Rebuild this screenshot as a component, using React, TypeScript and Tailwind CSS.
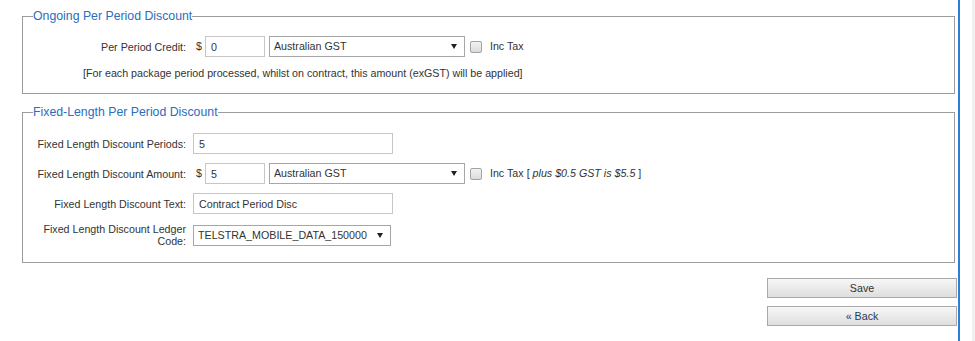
import React from "react";

function GstSelect({ value, w }: { value: string; w: string }) {
  return (
    <div className={`relative ${w} h-[21px] shrink-0`}>
      <select
        defaultValue={value}
        className="block appearance-none w-full h-full border border-[#a6a6a6] bg-white pl-[4px] text-[10.7px] text-[#333] outline-none rounded-none"
      >
        <option>{value}</option>
      </select>
      <svg
        className="absolute right-[8px] top-[8px] pointer-events-none"
        width="6"
        height="5"
        viewBox="0 0 6 5"
      >
        <path d="M0 0h6L3 5z" fill="#222" />
      </svg>
    </div>
  );
}

function TextBox({ value, w }: { value: string; w: string }) {
  return (
    <input
      type="text"
      defaultValue={value}
      className={`block ${w} h-[21px] shrink-0 border border-[#c6c6c6] bg-white px-[5px] text-[10.7px] text-[#333] outline-none`}
    />
  );
}

function CheckBox() {
  return (
    <input
      type="checkbox"
      className="block appearance-none w-[12px] h-[12px] shrink-0 rounded-[2px] border border-[#a3a3a3] bg-gradient-to-b from-[#f2f2f2] to-[#dcdcdc] m-0"
    />
  );
}

function Label({ children }: { children: React.ReactNode }) {
  return (
    <div className="text-right text-[10.7px] leading-[12px] text-[#333] pr-[1px]">{children}</div>
  );
}

function Dollar() {
  return <span className="ml-[3px] mr-[3px] text-[10.7px] text-[#333]">$</span>;
}

export default function App() {
  return (
    <div className="flex h-[341px] w-[975px] font-['Liberation_Sans',Arial,sans-serif] text-[#333] bg-[#f0f0f0]">
      <div className="w-[958px] bg-white flex flex-col pt-[6px]">
        {/* Fieldset 1 */}
        <fieldset className="ml-[22px] mr-[3px] border border-[#9c9c9c] pb-[13px]">
          <legend className="ml-[10px] px-0 text-[12.3px] leading-[20px] text-[#2b6dbe]">
            Ongoing Per Period Discount
          </legend>
          <div className="grid grid-cols-[164px_1fr] gap-x-[6px] mt-[10px] items-center">
            <Label>Per Period Credit:</Label>
            <div className="flex items-center">
              <Dollar />
              <TextBox value="0" w="w-[60px]" />
              <div className="ml-[4px]">
                <GstSelect value="Australian GST" w="w-[196px]" />
              </div>
              <div className="ml-[5px] flex items-center">
                <CheckBox />
              </div>
              <span className="ml-[8px] text-[10.7px]">Inc Tax</span>
            </div>
          </div>
          <div className="mt-[9px] pl-[60px] text-[10.7px] leading-[14px]">
            [For each package period processed, whilst on contract, this amount (exGST) will be applied]
          </div>
        </fieldset>

        {/* Fieldset 2 */}
        <fieldset className="ml-[22px] mr-[3px] mt-[8px] border border-[#9c9c9c] pb-[15px]">
          <legend className="ml-[10px] px-0 text-[12.3px] leading-[20px] text-[#2b6dbe]">
            Fixed-Length Per Period Discount
          </legend>
          <div className="grid grid-cols-[164px_1fr] gap-x-[6px] gap-y-[9px] mt-[11px] items-center">
            <Label>Fixed Length Discount Periods:</Label>
            <div className="flex items-center">
              <TextBox value="5" w="w-[200px]" />
            </div>

            <Label>Fixed Length Discount Amount:</Label>
            <div className="flex items-center">
              <Dollar />
              <TextBox value="5" w="w-[60px]" />
              <div className="ml-[4px]">
                <GstSelect value="Australian GST" w="w-[196px]" />
              </div>
              <div className="ml-[5px] flex items-center">
                <CheckBox />
              </div>
              <span className="ml-[8px] text-[10.7px]">Inc Tax</span>
              <span className="ml-[3px] text-[10.7px]">
                [ <i>plus $0.5 GST is $5.5</i> ]
              </span>
            </div>

            <Label>Fixed Length Discount Text:</Label>
            <div className="flex items-center">
              <TextBox value="Contract Period Disc" w="w-[200px]" />
            </div>

            <Label>
              Fixed Length Discount Ledger
              <br />
              Code:
            </Label>
            <div className="flex items-center">
              <GstSelect value="TELSTRA_MOBILE_DATA_150000" w="w-[198px]" />
            </div>
          </div>
        </fieldset>

        {/* Buttons */}
        <div className="flex flex-col items-end mt-[15px] mr-[1px] gap-[8px]">
          <button className="w-[190px] h-[20px] border border-[#a9a9a9] bg-gradient-to-b from-[#f7f7f7] to-[#dedede] text-[10.7px] text-[#333] leading-none">
            Save
          </button>
          <button className="w-[190px] h-[20px] border border-[#a9a9a9] bg-gradient-to-b from-[#f7f7f7] to-[#dedede] text-[10.7px] text-[#2c3a55] leading-none">
            « Back
          </button>
        </div>
      </div>
      <div className="w-[2px] bg-[#2d7fd6]" />
      <div className="w-[12px] bg-white" />
      <div className="flex-1 bg-[#f0f0f0]" />
    </div>
  );
}
